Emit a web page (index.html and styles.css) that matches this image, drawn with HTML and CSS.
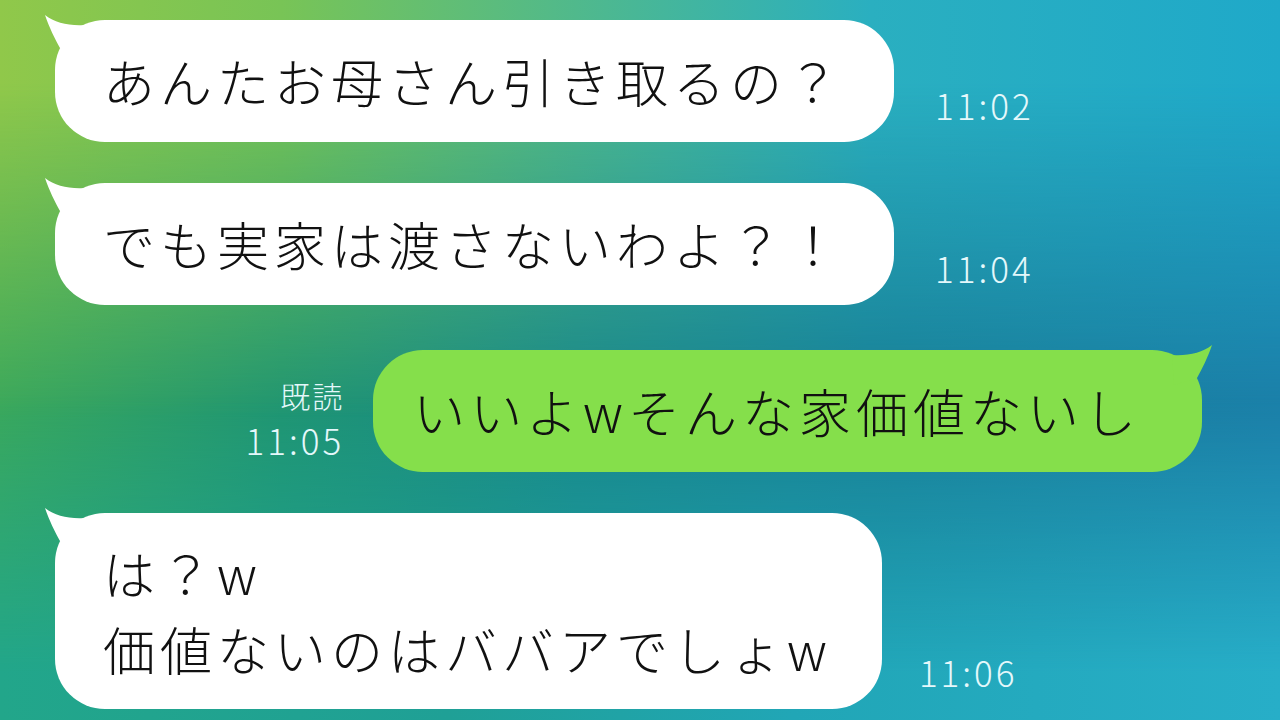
FILE: index.html
```html
<!DOCTYPE html>
<html lang="ja">

<head>
    <meta charset="UTF-8">
    <meta name="viewport" content="width=device-width, initial-scale=1.0">
    <title>トーク</title>
    <link rel="stylesheet" href="styles.css">
</head>

<body>

    <div class="chat">

        <!-- 相手のメッセージ -->
        <div class="row">
            <div class="bubble">
                <svg class="tail" viewBox="0 0 50 50"><path d="M2 2 C6 14 12 26 17 35 L40 42 L42 12 C26 13 12 10 2 2 Z" /></svg>
                あんたお母さん引き取るの？
            </div>
            <div class="time">11:02</div>
        </div>

        <div class="row">
            <div class="bubble">
                <svg class="tail" viewBox="0 0 50 50"><path d="M2 2 C6 14 12 26 17 35 L40 42 L42 12 C26 13 12 10 2 2 Z" /></svg>
                でも実家は渡さないわよ？！
            </div>
            <div class="time">11:04</div>
        </div>

        <!-- 自分のメッセージ -->
        <div class="row row-me">
            <div class="meta">
                <div class="read">既読</div>
                <div class="time">11:05</div>
            </div>
            <div class="bubble bubble-me">
                <svg class="tail" viewBox="0 0 50 50"><path d="M2 2 C6 14 12 26 17 35 L40 42 L42 12 C26 13 12 10 2 2 Z" /></svg>
                いいよwそんな家価値ないし
            </div>
        </div>

        <div class="row">
            <div class="bubble bubble-multi">
                <svg class="tail" viewBox="0 0 50 50"><path d="M2 2 C6 14 12 26 17 35 L40 42 L42 12 C26 13 12 10 2 2 Z" /></svg>
                は？w<br>価値ないのはババアでしょw
            </div>
            <div class="time time-last">11:06</div>
        </div>

    </div>

</body>

</html>
```

FILE: styles.css
```css
/* Фон и общие настройки */
body {
    margin: 0;
    width: 1280px;
    height: 720px;
    overflow: hidden;
    position: relative;
    font-family: "Noto Sans CJK JP", "Noto Sans", sans-serif;
    background: linear-gradient(90deg, #3aa85c 0%, #1f9572 22%, #178689 45%, #177d95 70%, #1b7ea8 100%);
}

/* Верхняя светлая полоса фона */
body::before {
    content: "";
    position: absolute;
    left: 0;
    top: 0;
    width: 100%;
    height: 58%;
    background: linear-gradient(90deg, #90c84a 0%, #78c456 22%, #50b98c 45%, #2aafc0 68%, #1fa9c9 100%);
    -webkit-mask-image: linear-gradient(180deg, #000 0%, #000 20%, transparent 100%);
    mask-image: linear-gradient(180deg, #000 0%, #000 20%, transparent 100%);
    z-index: -1;
}

/* Нижняя полоса фона */
body::after {
    content: "";
    position: absolute;
    left: 0;
    bottom: 0;
    width: 100%;
    height: 45%;
    background: linear-gradient(90deg, #22a68a 0%, #1fa096 35%, #21a6b6 62%, #27aec8 100%);
    -webkit-mask-image: linear-gradient(0deg, #000 0%, #000 15%, transparent 100%);
    mask-image: linear-gradient(0deg, #000 0%, #000 15%, transparent 100%);
    z-index: -1;
}

.chat {
    display: flex;
    flex-direction: column;
    gap: 41px;
    padding-top: 20px;
}

.row {
    display: flex;
    align-items: flex-end;
    padding-left: 55px;
}

.row-me {
    justify-content: flex-end;
    padding-left: 0;
    padding-right: 78px;
    margin-top: 4px;
}

.bubble {
    position: relative;
    background-color: #fff;
    color: #111;
    font-size: 52px;
    font-weight: 300;
    letter-spacing: 5px;
    line-height: 76px;
    padding: 23px 50px 23px 48px;
    border-radius: 50px;
}

.bubble-multi {
    padding-top: 22px;
    padding-bottom: 22px;
}

.bubble-me {
    background-color: #85df4b;
    padding-left: 40px;
    padding-right: 61px;
}

/* Хвостик пузыря */
.tail {
    position: absolute;
    left: -12px;
    top: -7px;
    width: 50px;
    height: 50px;
    fill: #fff;
}

.bubble-me .tail {
    left: auto;
    right: -12px;
    transform: scaleX(-1);
    fill: #85df4b;
}

.time {
    color: #e4f8fb;
    font-size: 35px;
    font-weight: 300;
    line-height: 1;
    letter-spacing: 3px;
    margin-left: 41px;
    margin-bottom: 20px;
}

.time-last {
    margin-left: 37px;
}

.meta {
    display: flex;
    flex-direction: column;
    align-items: flex-end;
    margin-right: 29px;
    margin-bottom: 15px;
}

.meta .time {
    margin: 0;
}

.read {
    color: #e4f8fb;
    font-size: 30px;
    font-weight: 300;
    line-height: 1;
    letter-spacing: 2px;
    margin-bottom: 12px;
}
```
